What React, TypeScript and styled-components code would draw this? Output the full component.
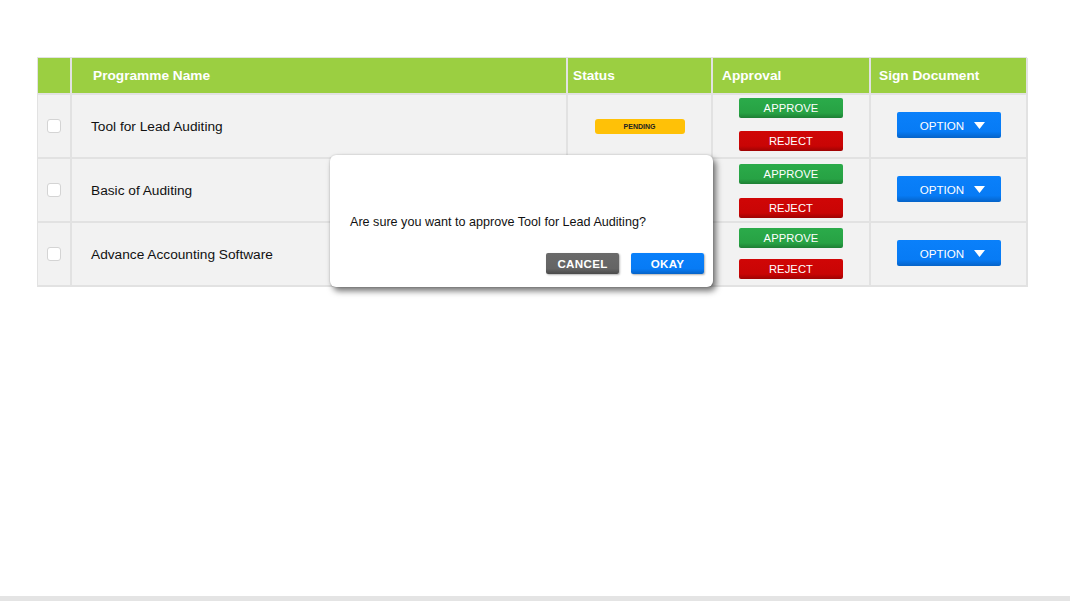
import React from "react";
import styled, { createGlobalStyle } from "styled-components";

const Global = createGlobalStyle`
  html, body { margin: 0; padding: 0; background: #fff; }
  body { font-family: "Liberation Sans", Arial, sans-serif; }
`;

const Page = styled.div`
  position: relative;
  min-height: 100vh;
  display: flex;
  flex-direction: column;
  box-sizing: border-box;
`;

const Main = styled.div`
  flex: 1;
  padding: 57px 43px 0 37px;
`;

const BottomBar = styled.div`
  height: 5px;
  background: #e4e4e4;
`;

const Table = styled.div`
  position: relative;
  width: 990px;
  display: grid;
  grid-template-columns: 34px 496px 145px 158px 157px;
  background: #e2e2e2;
  border-left: 1px solid #e2e2e2;
  border-top: 1px solid #e2e2e2;
  box-sizing: border-box;
`;

const HeadCell = styled.div<{ $pad?: number }>`
  background: #9bcf41;
  color: #fff;
  font-weight: bold;
  font-size: 13.7px;
  display: flex;
  align-items: center;
  padding-left: ${(p) => p.$pad ?? 0}px;
  border-right: 2px solid #e2e2e2;
  border-bottom: 2px solid #e2e2e2;
  box-sizing: border-box;
  height: 37px;
`;

const Cell = styled.div<{ $pad?: number; $center?: boolean }>`
  height: 64px;
  background: #f2f2f2;
  display: flex;
  align-items: center;
  justify-content: ${(p) => (p.$center ? "center" : "flex-start")};
  padding-left: ${(p) => p.$pad ?? 0}px;
  border-right: 2px solid #e2e2e2;
  border-bottom: 2px solid #e2e2e2;
  box-sizing: border-box;
  font-size: 13.7px;
  color: #111;
`;

const Check = styled.div`
  width: 14px;
  height: 14px;
  margin-left: 9px;
  background: #fff;
  border: 1px solid #d4d4d4;
  border-radius: 3px;
  box-sizing: border-box;
`;

const Pending = styled.div`
  width: 90px;
  height: 15px;
  background: #ffc107;
  border-radius: 3px;
  font-size: 7px;
  font-weight: bold;
  color: #222;
  display: flex;
  align-items: center;
  justify-content: center;
`;

const ApprovalStack = styled.div<{ $gap: number; $shift: number }>`
  display: flex;
  flex-direction: column;
  gap: ${(p) => p.$gap}px;
  margin-top: ${(p) => p.$shift}px;
`;

const ActionBtn = styled.div<{ $kind: "approve" | "reject" }>`
  width: 104px;
  height: 20px;
  border-radius: 2px;
  background: ${(p) =>
    p.$kind === "approve"
      ? "linear-gradient(#2bab4a, #27a244 75%, #1d7f34)"
      : "linear-gradient(#d00606, #c90505 75%, #9e0303)"};
  color: #fff;
  font-size: 11.2px;
  display: flex;
  align-items: center;
  justify-content: center;
  letter-spacing: 0.1px;
`;

const OptionBtn = styled.div`
  width: 104px;
  height: 26px;
  margin-top: -2px;
  border-radius: 2px;
  background: linear-gradient(#0a80fa, #077bf5 75%, #0563c8);
  color: #fff;
  font-size: 11.6px;
  display: flex;
  align-items: center;
  justify-content: center;
  gap: 10px;
  padding-left: 8px;
  box-sizing: border-box;
`;

const Modal = styled.div`
  position: absolute;
  left: 292px;
  top: 97px;
  width: 383px;
  height: 132px;
  background: #fff;
  border-radius: 6px;
  box-shadow: 3px 4px 6px rgba(0, 0, 0, 0.55), 0 0 2px rgba(0, 0, 0, 0.2);
  display: flex;
  flex-direction: column;
  padding: 60px 9px 0 20px;
  box-sizing: border-box;
`;

const ModalText = styled.div`
  font-size: 12.6px;
  color: #111;
`;

const ModalActions = styled.div`
  display: flex;
  justify-content: flex-end;
  gap: 12px;
  margin-top: 24px;
`;

const ModalBtn = styled.div<{ $primary?: boolean }>`
  width: 73px;
  height: 21px;
  border-radius: 2px;
  background: ${(p) =>
    p.$primary
      ? "linear-gradient(#0a80fa, #077bf5 75%, #0563c8)"
      : "linear-gradient(#6a6a6a, #646464 75%, #4a4a4a)"};
  box-shadow: 1px 1px 2px rgba(0, 0, 0, 0.3);
  color: #fff;
  font-size: 11.6px;
  font-weight: bold;
  display: flex;
  align-items: center;
  justify-content: center;
  letter-spacing: 0.3px;
`;

const Caret = () => (
  <svg width="11" height="7" viewBox="0 0 11 7">
    <path d="M0 0 H11 L5.5 7 Z" fill="#fff" />
  </svg>
);

const rows = [
  { name: "Tool for Lead Auditing", pending: true, gap: 13, shift: -4 },
  { name: "Basic of Auditing", pending: false, gap: 14, shift: 1 },
  { name: "Advance Accounting Software", pending: false, gap: 11, shift: -1 },
];

export default function App() {
  return (
    <Page>
      <Global />
      <Main>
        <Table>
          <HeadCell />
          <HeadCell $pad={21}>Programme Name</HeadCell>
          <HeadCell $pad={5}>Status</HeadCell>
          <HeadCell $pad={9}>Approval</HeadCell>
          <HeadCell $pad={8}>Sign Document</HeadCell>
          {rows.map((r) => (
            <React.Fragment key={r.name}>
              <Cell>
                <Check />
              </Cell>
              <Cell $pad={19}>{r.name}</Cell>
              <Cell $center>{r.pending && <Pending>PENDING</Pending>}</Cell>
              <Cell $center>
                <ApprovalStack $gap={r.gap} $shift={r.shift}>
                  <ActionBtn $kind="approve">APPROVE</ActionBtn>
                  <ActionBtn $kind="reject">REJECT</ActionBtn>
                </ApprovalStack>
              </Cell>
              <Cell $center>
                <OptionBtn>
                  OPTION <Caret />
                </OptionBtn>
              </Cell>
            </React.Fragment>
          ))}
          <Modal>
            <ModalText>Are sure you want to approve Tool for Lead Auditing?</ModalText>
            <ModalActions>
              <ModalBtn>CANCEL</ModalBtn>
              <ModalBtn $primary>OKAY</ModalBtn>
            </ModalActions>
          </Modal>
        </Table>
      </Main>
      <BottomBar />
    </Page>
  );
}
